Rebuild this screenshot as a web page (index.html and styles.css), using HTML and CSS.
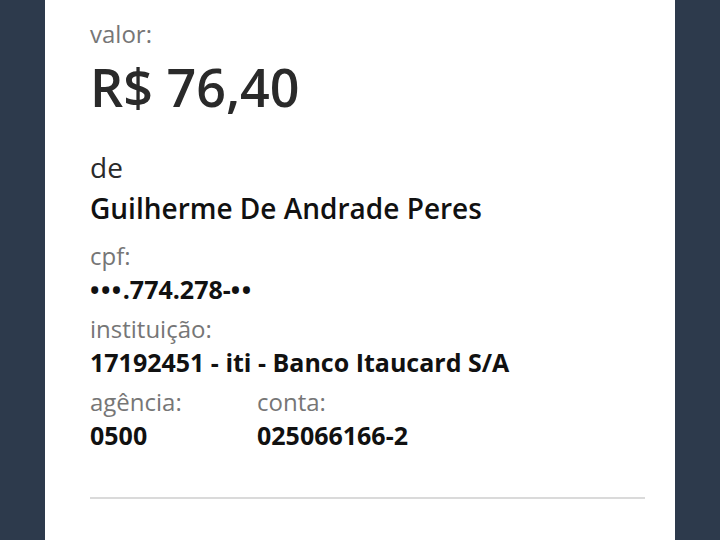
FILE: index.html
```html
<!DOCTYPE html>
<html lang="pt-BR">
<head>
<meta charset="utf-8">
<link rel="stylesheet" href="styles.css">
</head>
<body>
<div class="frame">
  <main class="card">
    <div class="label">valor:</div>
    <div class="amount">R$ 76,40</div>
    <div class="from">de</div>
    <div class="name">Guilherme De Andrade Peres</div>
    <section class="field">
      <div class="label">cpf:</div>
      <div class="value"><span class="mask">•••</span>.774.278-<span class="mask">••</span></div>
    </section>
    <section class="field">
      <div class="label">instituição:</div>
      <div class="value">17192451 - iti - Banco Itaucard S/A</div>
    </section>
    <section class="field pair">
      <div class="col">
        <div class="label">agência:</div>
        <div class="value">0500</div>
      </div>
      <div class="col">
        <div class="label">conta:</div>
        <div class="value">025066166-2</div>
      </div>
    </section>
    <hr class="divider">
  </main>
</div>
</body>
</html>
```

FILE: styles.css
```css
html, body {
  margin: 0;
  padding: 0;
  height: 100%;
}
body {
  background: #2d3a4c;
  font-family: "Open Sans", "Noto Sans", sans-serif;
  overflow: hidden;
}
.frame {
  display: flex;
  justify-content: center;
  height: 540px;
}
.card {
  width: 630px;
  background: #ffffff;
  padding: 18px 30px 0 45px;
  box-sizing: border-box;
  display: flex;
  flex-direction: column;
}
.label {
  font-size: 24px;
  line-height: 32px;
  color: #767676;
}
.amount {
  font-size: 52px;
  font-weight: 600;
  color: #2a2a2a;
  line-height: 60px;
  margin-top: 7px;
}
.from {
  font-size: 28px;
  color: #2a2a2a;
  line-height: 34px;
  margin-top: 33px;
}
.name {
  font-size: 28px;
  font-weight: 600;
  color: #111111;
  line-height: 34px;
  margin-top: 7px;
}
.field {
  margin-top: 7px;
}
.name + .field {
  margin-top: 15px;
}
.value {
  font-size: 25px;
  font-weight: 700;
  color: #111111;
  line-height: 34px;
}
.mask {
  letter-spacing: 1.5px;
}
.pair {
  display: grid;
  grid-template-columns: 167px 1fr;
}
.divider {
  border: 0;
  height: 2px;
  background: #dadada;
  margin: 45px 0 0 0;
  width: 555px;
}
```
